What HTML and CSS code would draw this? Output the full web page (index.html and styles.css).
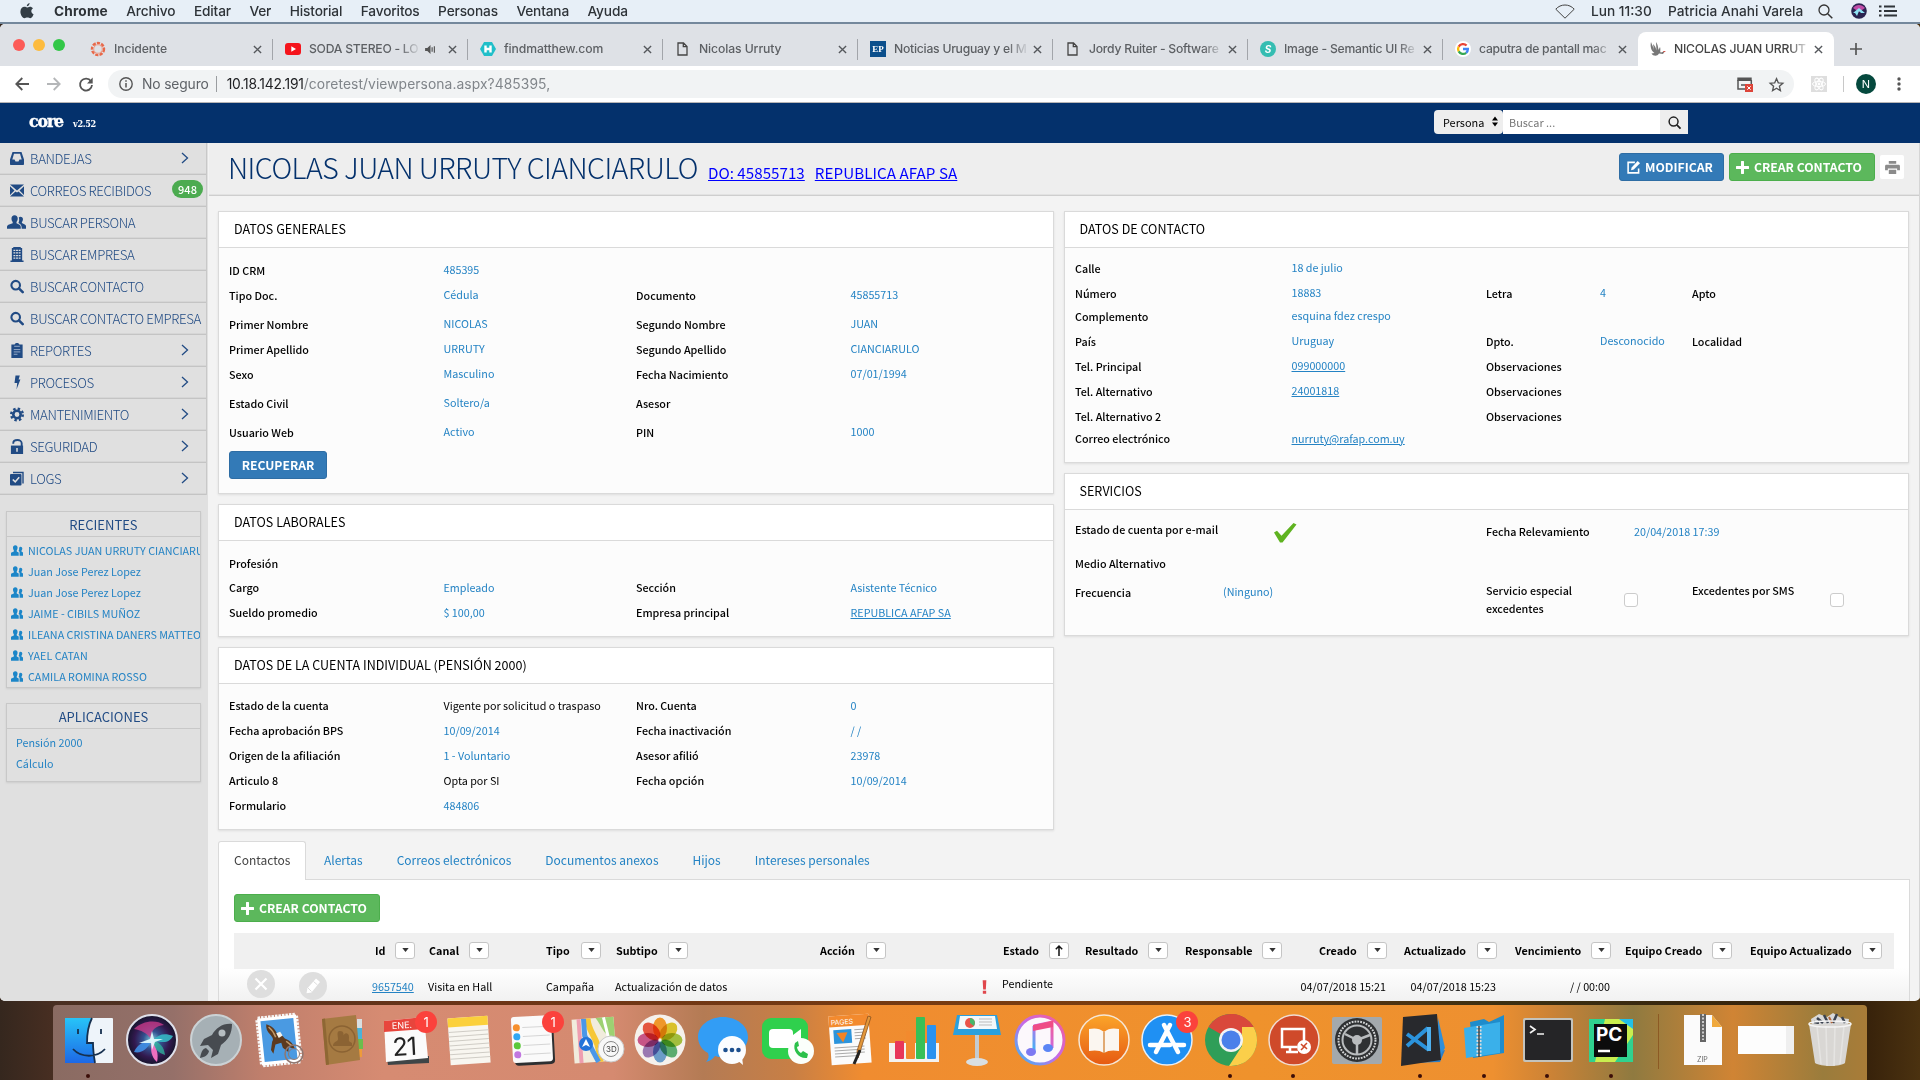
FILE: index.html
```html
<!DOCTYPE html>
<html lang="es">
<head>
<meta charset="utf-8">
<title>NICOLAS JUAN URRUTY CIANCIARULO</title>
<link rel="stylesheet" href="styles.css">
</head>
<body>
<svg class="defs" aria-hidden="true">
  <symbol id="users" viewBox="0 0 20 14"><path fill="currentColor" d="M8 0c2.200 0 3.300 1.500 3.300 3.400 0 1.500-.6 2.800-1.300 3.600v1.300l3.200 1.700c.9.500 1.300 1.400 1.300 2.500V14H0v-1.500C0 11.200.5 10.500 1.500 10L6 8.300V7C5.200 6.200 4.700 4.900 4.700 3.400 4.700 1.500 5.800 0 8 0zM12.400 2.300c.4-.5 1-.8 1.800-.8 1.700 0 2.600 1.200 2.600 2.700 0 1.100-.5 2.200-1.100 2.800v1l3 1.500c.9.500 1.300 1.100 1.300 2.100V14h-4.500c0-2.500-.6-4.200-1.800-4.900L12 8c.8-1.200 1.200-3.700.4-5.700z"/></symbol>
  <symbol id="users2" viewBox="0 0 14 12"><path fill="currentColor" d="M5 0c1.800 0 2.700 1.200 2.700 2.800 0 1.200-.4 2.300-1 3v1.400l2.300 1V12H0V8.700L3.300 7.200V5.800c-.6-.7-1-1.800-1-3C2.300 1.200 3.200 0 5 0zM11 1.500c1.500 0 2.200 1 2.200 2.200 0 1-.4 1.900-1 2.500v1.100l1.800.9V12h-4V7.500L8.800 6.700c.6-1 .9-2.300.7-3.700C9.700 2 10.200 1.500 11 1.500z"/></symbol>
  <symbol id="search" viewBox="0 0 16 16"><circle cx="6.500" cy="6.500" r="4.900" fill="none" stroke="currentColor" stroke-width="2.400"/><path d="M10.200 10.200l4.300 4.300" stroke="currentColor" stroke-width="2.900" stroke-linecap="round"/></symbol>
  <symbol id="chev" viewBox="0 0 8 12"><path d="M1 1l5.500 5L1 11" fill="none" stroke="currentColor" stroke-width="1.300"/></symbol>
  <symbol id="x" viewBox="0 0 10 10"><path d="M1 1l8 8M9 1L1 9" stroke="currentColor" stroke-width="1.500"/></symbol>
  <symbol id="page" viewBox="0 0 11 14"><path d="M1 1h5.500L10 4.500V13H1zM6.300 1v3.700H10" fill="none" stroke="currentColor" stroke-width="1.300"/></symbol>
  <symbol id="plus" viewBox="0 0 14 14"><path d="M7 1v12M1 7h12" stroke="currentColor" stroke-width="3.200" stroke-linecap="round"/></symbol>
  <symbol id="down" viewBox="0 0 8 5"><path fill="#333" d="M0 0h8L4 5z"/></symbol>
</svg>

<header class="menubar">
  <svg class="apple" viewBox="0 0 14 16"><path fill="#333d45" d="M9.600 0c.1 1.400-1.100 3.200-2.800 3.300C6.600 1.800 8 .2 9.600 0zM7 4.500c.7 0 1.700-.9 3.100-.8 1 0 2.200.6 2.900 1.600-2.500 1.500-2.100 4.900.6 5.900-.6 1.700-1.900 4-3.300 4-1 0-1.600-.6-2.900-.6s-2 .6-2.900.6C2.700 15.200.4 11.900.4 8.700c0-3 2-4.900 4.100-4.900 1.100 0 1.900.7 2.500.7z"/></svg>
  <nav class="menus"><b>Chrome</b><span>Archivo</span><span>Editar</span><span>Ver</span><span>Historial</span><span>Favoritos</span><span>Personas</span><span>Ventana</span><span>Ayuda</span></nav>
  <div class="status">
    <svg class="wifi" viewBox="0 0 20 15"><path d="M.8 5.200C5.500-.4 14.500-.4 19.200 5.200L10 14.200z" fill="none" stroke="#444" stroke-width="1"/></svg>
    <span class="clock">Lun 11:30</span><span class="who">Patricia Anahi Varela</span>
    <svg class="glass" viewBox="0 0 15 15"><circle cx="6" cy="6" r="5" fill="none" stroke="#333" stroke-width="1.300"/><path d="M9.700 9.700l4.600 4.600" stroke="#333" stroke-width="1.500"/></svg>
    <svg class="siri" viewBox="0 0 16 16"><circle cx="8" cy="8" r="7.800" fill="#2b2350"/><path d="M2 5c3-4 9-4 12 0L8 9z" fill="#c04ca8"/><path d="M2 10l6-5 6 5-4 0-2-2-2 5-2-3z" fill="#8fe3f4"/></svg>
    <svg class="list" viewBox="0 0 18 12"><path d="M5 1.500h11M5 6h13M5 10.500h13M0 1.500h2.500M0 6h2.500M0 10.500h2.500" stroke="#2f3439" stroke-width="1.900"/></svg>
  </div>
</header>

<div class="window">
  <div class="tabstrip">
    <div class="lights"><i class="red"></i><i class="yel"></i><i class="grn"></i></div>
    <div class="tab"><svg class="fav" viewBox="0 0 16 16"><circle cx="8" cy="8" r="6" fill="none" stroke="#e8694a" stroke-width="2.400" stroke-dasharray="3.200 1.200"/><circle cx="8" cy="8" r="4.300" fill="none" stroke="#ee9b86"/></svg><span class="tt">Incidente</span><svg class="close"><use href="#x"/></svg></div>
    <div class="tab"><svg class="fav" viewBox="0 0 16 16"><rect y="2" width="16" height="12" rx="3" fill="#f5141c"/><path d="M6.300 5.300v5.400L11 8z" fill="#fff"/></svg><span class="tt fade">SODA STEREO - LO</span><svg class="snd" viewBox="0 0 12 10"><path d="M0 3.300h2.500L6 0v10L2.500 6.700H0z" fill="#555"/><path d="M7.800 2.500v5M10.300 1.500v7" stroke="#555" stroke-width="1.300"/></svg><svg class="close"><use href="#x"/></svg></div>
    <div class="tab"><svg class="fav" viewBox="0 0 16 16"><path d="M4 1h8l4 7-4 7H4L0 8z" fill="#20bfc9"/><path d="M5.500 4.500v7M10.500 4.500v7M5.500 8h5" stroke="#fff" stroke-width="2.400"/></svg><span class="tt">findmatthew.com</span><svg class="close"><use href="#x"/></svg></div>
    <div class="tab"><svg class="fav pg"><use href="#page"/></svg><span class="tt">Nicolas Urruty</span><svg class="close"><use href="#x"/></svg></div>
    <div class="tab"><span class="fav ep">EP</span><span class="tt fade">Noticias Uruguay y el M</span><svg class="close"><use href="#x"/></svg></div>
    <div class="tab"><svg class="fav pg"><use href="#page"/></svg><span class="tt fade">Jordy Ruiter - Software</span><svg class="close"><use href="#x"/></svg></div>
    <div class="tab"><span class="fav sem">S</span><span class="tt fade">Image - Semantic UI Re</span><svg class="close"><use href="#x"/></svg></div>
    <div class="tab nosep"><svg class="fav" viewBox="0 0 16 16"><circle cx="8" cy="8" r="8" fill="#fff"/><g fill="none" stroke-width="2.300"><path d="M11.600 4.500A5 5 0 0 0 3.700 5.600" stroke="#e94335"/><path d="M3.700 5.600a5 5 0 0 0 0 4.800" stroke="#fbbc05"/><path d="M3.700 10.400a5 5 0 0 0 7.500 1.400" stroke="#34a853"/><path d="M11.200 11.800A5 5 0 0 0 12.900 8H8" stroke="#4285f4"/></g></svg><span class="tt fade">caputra de pantall mac</span><svg class="close"><use href="#x"/></svg></div>
    <div class="tab active"><svg class="fav" viewBox="0 0 16 16"><path d="M1 1c1 3 2 4 3 8L3 3c2 2 3 4 3.500 6.500L6 1c2 3 2 5 2.500 8L10 6c1 3-.5 5 1 5.500l4-1.500-2 3-4-.4C7 16 3 15 1.500 12.500l3-.5C1 10 0 5 1 1z" fill="#777"/><path d="M13 10.300l3-.2-2.300 1.500z" fill="#d63a2e"/></svg><span class="tt fade">NICOLAS JUAN URRUT</span><svg class="close"><use href="#x"/></svg></div>
    <svg class="newtab" viewBox="0 0 12 12"><path d="M6 0v12M0 6h12" stroke="#555" stroke-width="1.700"/></svg>
  </div>
  <div class="toolbar">
    <svg class="nav" viewBox="0 0 14 14"><path d="M14 7H1.500M7.300 1L1.300 7l6 6" fill="none" stroke="#555" stroke-width="1.800"/></svg>
    <svg class="nav" viewBox="0 0 14 14"><path d="M0 7h12.500M6.700 1l6 6-6 6" fill="none" stroke="#b4b6b8" stroke-width="1.800"/></svg>
    <svg class="nav" viewBox="0 0 14 14"><path d="M12 4.200A6 6 0 1 0 13 8" fill="none" stroke="#555" stroke-width="1.800"/><path d="M13.700.5v6H8z" fill="#555"/></svg>
    <div class="omni">
      <svg class="info" viewBox="0 0 14 14"><circle cx="7" cy="7" r="6.200" fill="none" stroke="#555" stroke-width="1.400"/><path d="M7 6v4.500M7 3.200v1.600" stroke="#555" stroke-width="1.500"/></svg>
      <span class="nos">No seguro</span><span class="url"><b>10.18.142.191</b>/coretest/viewpersona.aspx?485395,</span>
      <svg class="pop" viewBox="0 0 16 15"><path d="M1 3v9h7M14.300 3v4M4 8h5" fill="none" stroke="#555" stroke-width="1.500"/><path d="M.3.500h14.400v3.500H.3z" fill="#555"/><rect x="8" y="7" width="8" height="8" fill="#dd4439"/><path d="M10.300 9.300l3.400 3.400M13.700 9.300l-3.400 3.400" stroke="#fff"/></svg>
      <svg class="star" viewBox="0 0 16 15"><path d="M8 1.200l1.900 4.500 4.900.4-3.700 3.200 1.100 4.800L8 11.500l-4.200 2.600 1.100-4.800L1.200 6.100l4.900-.4z" fill="none" stroke="#555" stroke-width="1.400"/></svg>
    </div>
    <svg class="ext" viewBox="0 0 16 16"><rect width="16" height="16" fill="#dedede"/><g fill="none" stroke="#fff"><ellipse cx="8" cy="8" rx="6.500" ry="2.600"/><ellipse cx="8" cy="8" rx="6.500" ry="2.600" transform="rotate(60 8 8)"/><ellipse cx="8" cy="8" rx="6.500" ry="2.600" transform="rotate(120 8 8)"/></g><circle cx="8" cy="8" r="1.400" fill="#fff"/></svg>
    <i class="vsep"></i><span class="avatar">N</span>
    <svg class="dots" viewBox="0 0 4 14"><g fill="#555"><circle cx="2" cy="2" r="1.700"/><circle cx="2" cy="7" r="1.700"/><circle cx="2" cy="12" r="1.700"/></g></svg>
  </div>

  <div class="apphead">
    <span class="logo">core</span><span class="ver">v2.52</span>
    <div class="find"><span class="sel">Persona<svg viewBox="0 0 6 10"><path d="M3 0l3 4H0zM3 10L0 6h6z"/></svg></span><span class="inp">Buscar ...</span><span class="go"><svg viewBox="0 0 14 14"><circle cx="6" cy="6" r="4.800" fill="none" stroke="#222" stroke-width="1.600"/><path d="M9.500 9.500l4 4" stroke="#222" stroke-width="1.900"/></svg></span></div>
  </div>

  <div class="body">
    <aside class="side">
      <ul class="menu">
        <li><svg class="ic" viewBox="0 0 14 14"><path fill="currentColor" fill-rule="evenodd" d="M2.500.5h9L14 8v4.500c0 .8-.4 1-1 1H1c-.6 0-1-.3-1-1V8zM4 2.300L2.300 8H4.500l1 2h3l1-2h2.200L10 2.300z"/></svg>BANDEJAS<svg class="ch"><use href="#chev"/></svg></li>
        <li><svg class="ic" viewBox="0 0 14 12"><path fill="currentColor" d="M0 0h14L7 6zM0 1.800L4.500 6 0 10.400zM14 1.800L9.500 6l4.500 4.400zM5.500 6.900L7 8l1.500-1.100L14 12H0z"/></svg>CORREOS RECIBIDOS<em>948</em></li>
        <li><svg class="ic wide"><use href="#users"/></svg>BUSCAR PERSONA</li>
        <li><svg class="ic" viewBox="0 0 14 16"><path fill="currentColor" d="M3 0h8v1h1.500v13.500H14V16H0v-1.500h1.500V1H3z"/><path d="M3.200 3.500h7.600M3.200 6.300h7.600M3.200 9.100h7.600M3.200 11.900h7.600" stroke="#e0e0e0" stroke-width="1.400" stroke-dasharray="2 .8"/></svg>BUSCAR EMPRESA</li>
        <li><svg class="ic"><use href="#search"/></svg>BUSCAR CONTACTO</li>
        <li><svg class="ic"><use href="#search"/></svg>BUSCAR CONTACTO EMPRESA</li>
        <li><svg class="ic" viewBox="0 0 14 16"><path fill="currentColor" d="M1 1.500h3.500C5 .5 6 0 7 0s2 .5 2.500 1.500H13V16H1z"/><path d="M4 3.500h6M3.500 7h7M3.500 9.500h7M3.500 12h4" stroke="#9db0cb" stroke-width="1"/></svg>REPORTES<svg class="ch"><use href="#chev"/></svg></li>
        <li><svg class="ic" viewBox="0 0 14 14"><path fill="currentColor" d="M5.500 0h4.300L8.600 4h1.800L6.500 14l.7-6.500H4.500z"/></svg>PROCESOS<svg class="ch"><use href="#chev"/></svg></li>
        <li><svg class="ic" viewBox="0 0 14 14"><circle cx="7" cy="7" r="5.800" fill="none" stroke="currentColor" stroke-width="2.400" stroke-dasharray="2.400 2.155"/><circle cx="7" cy="7" r="3.700" fill="none" stroke="currentColor" stroke-width="2.600"/></svg>MANTENIMIENTO<svg class="ch"><use href="#chev"/></svg></li>
        <li><svg class="ic" viewBox="0 0 14 16"><path d="M3 5V4.500C3 2 5 1 7.500 1S12 2.500 12 4.500V8" fill="none" stroke="currentColor" stroke-width="2"/><path fill="currentColor" d="M.5 7h13v9H.5z"/><path d="M7 9.500v4" stroke="#e0e0e0" stroke-width="1.600"/></svg>SEGURIDAD<svg class="ch"><use href="#chev"/></svg></li>
        <li><svg class="ic" viewBox="0 0 14 14"><path d="M3 1h10v11" fill="none" stroke="currentColor" stroke-width="1.400"/><rect y="2.500" width="11.500" height="11.500" rx="1" fill="currentColor"/><path d="M2.800 8l2.400 2.400 4-4.600" fill="none" stroke="#e0e0e0" stroke-width="1.600"/></svg>LOGS<svg class="ch"><use href="#chev"/></svg></li>
      </ul>
      <section class="box rec"><h3>RECIENTES</h3>
        <a><svg><use href="#users2"/></svg>NICOLAS JUAN URRUTY CIANCIARULO</a>
        <a><svg><use href="#users2"/></svg>Juan Jose Perez Lopez</a>
        <a><svg><use href="#users2"/></svg>Juan Jose Perez Lopez</a>
        <a><svg><use href="#users2"/></svg>JAIME - CIBILS MUÑOZ</a>
        <a><svg><use href="#users2"/></svg>ILEANA CRISTINA DANERS MATTEO</a>
        <a><svg><use href="#users2"/></svg>YAEL CATAN</a>
        <a><svg><use href="#users2"/></svg>CAMILA ROMINA ROSSO</a>
      </section>
      <section class="box apps"><h3>APLICACIONES</h3><a>Pensión 2000</a><a>Cálculo</a></section>
    </aside>

    <main class="main">
      <div class="titlebar">
        <h1>NICOLAS JUAN URRUTY CIANCIARULO</h1><a class="doc">DO: 45855713</a><a class="org">REPUBLICA AFAP SA</a>
        <div class="acts">
          <button class="btn blue mod"><svg viewBox="0 0 14 14"><path d="M8.500 1.500H1.200v11.300h11.300V8" fill="none" stroke="#fff" stroke-width="1.700"/><path d="M11.500 0L14 2.400 7.300 9.200l-3 .7.700-3z" fill="#fff"/></svg>MODIFICAR</button>
          <button class="btn green crear"><svg><use href="#plus"/></svg>CREAR CONTACTO</button>
          <span class="print"><svg viewBox="0 0 16 14"><path fill="#8b8b8b" d="M4 0h8v3H4zM1.500 4h13c1 0 1.500.6 1.500 1.500V10h-3V8H3v2H0V5.500C0 4.600.5 4 1.500 4zM4 9.500h8V14H4z"/></svg></span>
        </div>
      </div>

      <div class="cols">
        <div class="left">
          <section class="card gen"><h2>DATOS GENERALES</h2><div class="cb">
            <div class="row"><b>ID CRM</b><span>485395</span></div>
            <div class="row t"><b>Tipo Doc.</b><span>Cédula</span><b>Documento</b><span>45855713</span></div>
            <div class="row"><b>Primer Nombre</b><span>NICOLAS</span><b>Segundo Nombre</b><span>JUAN</span></div>
            <div class="row"><b>Primer Apellido</b><span>URRUTY</span><b>Segundo Apellido</b><span>CIANCIARULO</span></div>
            <div class="row t"><b>Sexo</b><span>Masculino</span><b>Fecha Nacimiento</b><span>07/01/1994</span></div>
            <div class="row t"><b>Estado Civil</b><span>Soltero/a</span><b>Asesor</b><span></span></div>
            <div class="row l"><b>Usuario Web</b><span>Activo</span><b>PIN</b><span>1000</span></div>
            <button class="btn blue recu">RECUPERAR</button>
          </div></section>
          <section class="card lab"><h2>DATOS LABORALES</h2><div class="cb">
            <div class="row s"><b>Profesión</b></div>
            <div class="row"><b>Cargo</b><span>Empleado</span><b>Sección</b><span>Asistente Técnico</span></div>
            <div class="row"><b>Sueldo promedio</b><span>$ 100,00</span><b>Empresa principal</b><span><u>REPUBLICA AFAP SA</u></span></div>
          </div></section>
          <section class="card cta"><h2>DATOS DE LA CUENTA INDIVIDUAL (PENSIÓN 2000)</h2><div class="cb">
            <div class="row"><b>Estado de la cuenta</b><span class="k">Vigente por solicitud o traspaso</span><b>Nro. Cuenta</b><span>0</span></div>
            <div class="row"><b>Fecha aprobación BPS</b><span>10/09/2014</span><b>Fecha inactivación</b><span>/ /</span></div>
            <div class="row"><b>Origen de la afiliación</b><span>1 - Voluntario</span><b>Asesor afilió</b><span>23978</span></div>
            <div class="row"><b>Articulo 8</b><span class="k">Opta por SI</span><b>Fecha opción</b><span>10/09/2014</span></div>
            <div class="row"><b>Formulario</b><span>484806</span></div>
          </div></section>
        </div>
        <div class="right">
          <section class="card con"><h2>DATOS DE CONTACTO</h2><div class="cb">
            <div class="row"><b>Calle</b><span>18 de julio</span></div>
            <div class="row s"><b>Número</b><span>18883</span><b>Letra</b><span>4</span><b>Apto</b></div>
            <div class="row"><b>Complemento</b><span>esquina fdez crespo</span></div>
            <div class="row"><b>País</b><span>Uruguay</span><b>Dpto.</b><span>Desconocido</span><b>Localidad</b></div>
            <div class="row"><b>Tel. Principal</b><span><u>099000000</u></span><b>Observaciones</b></div>
            <div class="row"><b>Tel. Alternativo</b><span><u>24001818</u></span><b>Observaciones</b></div>
            <div class="row xs"><b>Tel. Alternativo 2</b><span></span><b>Observaciones</b></div>
            <div class="row lastrow"><b>Correo electrónico</b><span><u>nurruty@rafap.com.uy</u></span></div>
          </div></section>
          <section class="card ser"><h2>SERVICIOS</h2><div class="cb">
            <div class="srow r1"><b>Estado de cuenta por e-mail</b><svg class="ok" viewBox="0 0 24 20"><path d="M1 9.500l3-1.700 4.500 5L20.500 0 23.500 1.500 9.500 19.500H7z" fill="#5fb320"/></svg><b class="lower">Fecha Relevamiento</b><span class="lower">20/04/2018 17:39</span></div>
            <div class="srow r2"><b>Medio Alternativo</b></div>
            <div class="srow r3"><b class="lower">Frecuencia</b><span>(Ninguno)</span><b class="two">Servicio especial excedentes</b><i class="chk"></i><b class="sms">Excedentes por SMS</b><i class="chk"></i></div>
          </div></section>
        </div>
      </div>

      <nav class="tabs"><span class="on">Contactos</span><span>Alertas</span><span>Correos electrónicos</span><span>Documentos anexos</span><span>Hijos</span><span>Intereses personales</span></nav>
      <div class="pane">
        <button class="btn green crear"><svg><use href="#plus"/></svg>CREAR CONTACTO</button>
        <div class="thead">
          <div class="h1c">Id<i><svg><use href="#down"/></svg></i></div>
          <div class="h2c">Canal<i><svg><use href="#down"/></svg></i></div>
          <div class="h3c">Tipo<i><svg><use href="#down"/></svg></i></div>
          <div class="h4c">Subtipo<i><svg><use href="#down"/></svg></i></div>
          <div class="h5c">Acción<i><svg><use href="#down"/></svg></i></div>
          <div class="h6c">Estado<i><svg class="up" viewBox="0 0 8 11"><path d="M4 11V1M.8 4.200L4 1l3.200 3.200" fill="none" stroke="#111" stroke-width="1.500"/></svg></i></div>
          <div class="h7c">Resultado<i><svg><use href="#down"/></svg></i></div>
          <div class="h8c">Responsable<i><svg><use href="#down"/></svg></i></div>
          <div class="h9c">Creado<i><svg><use href="#down"/></svg></i></div>
          <div class="h10c">Actualizado<i><svg><use href="#down"/></svg></i></div>
          <div class="h11c">Vencimiento<i><svg><use href="#down"/></svg></i></div>
          <div class="h12c">Equipo Creado<i><svg><use href="#down"/></svg></i></div>
          <div class="h13c">Equipo Actualizado<i><svg><use href="#down"/></svg></i></div>
        </div>
        <div class="trow">
          <svg class="circ" viewBox="0 0 28 28"><circle cx="14" cy="14" r="14" fill="#dedede"/><path d="M8.500 8.500l11 11M19.500 8.500l-11 11" stroke="#fff" stroke-width="2.200"/></svg>
          <svg class="circ low" viewBox="0 0 28 28"><circle cx="14" cy="14" r="14" fill="#dedede"/><path d="M17 6.500l4 3.500-8.500 10.500-5 .8 1-5z" fill="#fff"/><path d="M14.500 9.500l4 3.500M9 16l3.500 3.500" stroke="#dedede" stroke-width="1"/></svg>
          <u class="id">9657540</u><span>Visita en Hall</span><span>Campaña</span><span>Actualización de datos</span>
          <svg class="bang" viewBox="0 0 6 16"><path d="M.8 0h4.400l-.6 11H1.400zM1 12.500h4V16H1z" fill="#e0474c"/></svg>
          <span class="pend">Pendiente</span><span class="d">04/07/2018 15:21</span><span class="d">04/07/2018 15:23</span><span class="d">/ / 00:00</span>
        </div>
      </div>
    </main>
  </div>
</div>

<footer class="dock">
  <div class="app run"><svg viewBox="0 0 52 52"><defs><linearGradient id="fi" x2="0" y2="1"><stop stop-color="#27c4f8"/><stop offset="1" stop-color="#1d68e6"/></linearGradient></defs><rect x="2" y="4" width="48" height="45" rx="1" fill="#eef4fa"/><path d="M2 4h27c-4 8-5 16-5 25h6c0 8 1 14 2 20H2z" fill="url(#fi)"/><path d="M29 4c-4 8-5 16-5 25h6c0 8 1 14 2 20M15 15v5M38 15v5M10 35c8 9 24 9 32 0" fill="none" stroke="#16304f" stroke-width="1.800"/></svg></div>
  <div class="app"><svg viewBox="0 0 52 52"><defs><radialGradient id="si"><stop stop-color="#7fd0e0"/><stop offset=".35" stop-color="#33518f"/><stop offset=".7" stop-color="#32194f"/><stop offset="1" stop-color="#14142a"/></radialGradient></defs><circle cx="26" cy="26" r="25" fill="url(#si)" stroke="#dfe0ea" stroke-width="2"/><path d="M8 15c8-8 22-10 30-4-8 1-14 5-13 14-4-6-10-9-17-10z" fill="#d13c8c" opacity=".75"/><path d="M27 26c6-6 12-7 20-4-3 6-9 8-20 4z" fill="#35b8c4" opacity=".9"/><path d="M25 27c-6 0-14 3-17 11 7 2 14-3 17-11z" fill="#3f8fe6" opacity=".9"/><path d="M26 27c4 5 7 13 5 21-6-5-7-13-5-21z" fill="#ef6fc0"/><path d="M27 27c7 1 11 6 12 14-7-2-11-7-12-14z" fill="#2fb8a0" opacity=".75"/><path d="M26 17l2 8 9 0-8 3-3 8-1-7-12 0 11-4z" fill="#e4fdff" opacity=".9"/></svg></div>
  <div class="app"><svg viewBox="0 0 52 52"><circle cx="26" cy="26" r="25" fill="#a6b0b5" stroke="#cbd2d5" stroke-width="2"/><path d="M42 10c-9-1-16 4-20 11l-8 4-4 7 8-1 5 5-2 8 7-4 3-9c7-5 11-11 11-21z" fill="#474b50"/><circle cx="32" cy="19" r="3.500" fill="#b5bdc1"/><path d="M16 34c-4 1-5 5-6 10 5-1 8-3 9-7z" fill="#474b50"/></svg></div>
  <div class="app"><svg viewBox="0 0 52 52"><g transform="rotate(-6 26 26)"><rect x="7" y="3" width="38" height="46" fill="none" stroke="#f6f6f6" stroke-width="5" stroke-dasharray="2.500 1"/><rect x="8" y="4" width="36" height="44" fill="#4a9ae2" stroke="#fff" stroke-width="3"/><path d="M15 9c5 2 9 6 10 12l4 0 3 4c6 3 8 7 9 12l-6-3-1 5-5-5-1-5-6 1-3 9-2-4 2-8c2-2 1-4-1-7-3-4-4-7-3-11z" fill="#5c3a1f"/><path d="M17 12c3 3 5 7 6 11M33 28l5 5" stroke="#c39a68" stroke-width="1.500" fill="none"/><path d="M24 19l4-1 2 4-4 2z" fill="#f4f1e9"/></g><circle cx="41" cy="40" r="9" fill="none" stroke="#8f7770" stroke-width="1.500"/><circle cx="41" cy="40" r="5.500" fill="none" stroke="#8f7770"/></svg></div>
  <div class="app"><svg viewBox="0 0 52 52"><path d="M41 5h5v12h-5z" fill="#d9dfe0"/><path d="M41 14h5v12h-5z" fill="#4ab3d9"/><path d="M41 25h6v10h-6z" fill="#6bbd4d"/><path d="M41 35h5v8h-5z" fill="#ee9b3a"/><path d="M6 5l34-4 4 45-34 5z" fill="#a57a42"/><path d="M6 5l3-.4 4 46-3 .4z" fill="#8e6734"/><circle cx="26" cy="25" r="13" fill="none" stroke="#8b6333" stroke-width="1.500"/><path d="M17 32c0-5 5-4 5-7s-2-8 2-8 4 3 3 7c0-6 6-6 6-1 0 4-1 4 3 6v3z" fill="#8b6333"/></svg></div>
  <div class="app"><svg viewBox="0 0 52 52"><path d="M7 45l42-3v7L8 51z" fill="#3f4547"/><path d="M4 7l40-4 4 41-42 4z" fill="#fbfbfb"/><path d="M4 7l40-4 1 12L4 18z" fill="#e8453c"/><text x="12" y="15" class="t9" transform="rotate(-3 12 15)">ENE.</text><text x="13" y="42" class="t22" transform="rotate(-3 13 42)">21</text></svg><span class="badge">1</span></div>
  <div class="app"><svg viewBox="0 0 52 52"><g transform="rotate(-4 26 26)"><path d="M6 3h40v47H6z" fill="#f8f6f0"/><path d="M6 3h40v9H6z" fill="#fbd03b"/><path d="M6 17h40M6 21.500h40M6 26h40M6 30.500h40M6 35h40M6 39.500h40M6 44h40" stroke="#cfccc5"/></g></svg></div>
  <div class="app"><svg viewBox="0 0 52 52"><g transform="rotate(-3 26 26)"><rect x="7" y="4" width="40" height="47" rx="4" fill="#2d2f31"/><rect x="5" y="2" width="40" height="46" rx="3" fill="#fafafa"/><path d="M16 13h27M16 22h27M16 31h27M16 40h27" stroke="#d5d5d5"/><circle cx="10" cy="13" r="3.500" fill="#f78f2d"/><circle cx="10" cy="22" r="3.500" fill="#2fa7f3"/><circle cx="10" cy="31" r="3.500" fill="#5cc83b"/><circle cx="10" cy="40" r="3.500" fill="#c177e0"/></g></svg><span class="badge">1</span></div>
  <div class="app"><svg viewBox="0 0 52 52"><g transform="rotate(-4 26 26)"><rect x="3" y="4" width="42" height="44" fill="#f1ecdd"/><path d="M10 4v44" stroke="#ee9eb0" stroke-width="4"/><path d="M19 4c0 16 10 18 10 44" fill="none" stroke="#f6c736" stroke-width="6"/><path d="M15 4v17l12 27" fill="none" stroke="#4b97e8" stroke-width="5"/><path d="M27 4h18v22c-12-4-12-14-18-22z" fill="#9dd172"/><path d="M35 4l4 23" stroke="#fff" stroke-width="3"/></g><circle cx="16" cy="30" r="7" fill="#2474d9"/><path d="M16 25l4 8-4-2-4 2z" fill="#fff"/><circle cx="41" cy="35" r="13" fill="#f8f8f8" stroke="#c8c8c8"/><circle cx="41" cy="35" r="7.500" fill="none" stroke="#888"/><text x="36" y="38" class="t8">3D</text></svg></div>
  <div class="app"><svg viewBox="0 0 52 52"><circle cx="26" cy="26" r="25.500" fill="#f5f1ec"/><g class="petals"><ellipse cx="26" cy="14" rx="7" ry="10.500" fill="#f9a02d"/><ellipse cx="26" cy="14" rx="7" ry="10.500" fill="#e2cc2f" transform="rotate(45 26 26)"/><ellipse cx="26" cy="14" rx="7" ry="10.500" fill="#a9c942" transform="rotate(90 26 26)"/><ellipse cx="26" cy="14" rx="7" ry="10.500" fill="#5fb679" transform="rotate(135 26 26)"/><ellipse cx="26" cy="14" rx="7" ry="10.500" fill="#6fa5d8" transform="rotate(180 26 26)"/><ellipse cx="26" cy="14" rx="7" ry="10.500" fill="#9f7fc0" transform="rotate(225 26 26)"/><ellipse cx="26" cy="14" rx="7" ry="10.500" fill="#cf5a91" transform="rotate(270 26 26)"/><ellipse cx="26" cy="14" rx="7" ry="10.500" fill="#ee5a44" transform="rotate(315 26 26)"/></g></svg></div>
  <div class="app"><svg viewBox="0 0 52 52"><path d="M26 3c14 0 25 9 25 20S40 43 26 43c-3 0-6 0-8-1-2 3-5 5-9 6 3-3 3-6 2-9C5 36 1 30 1 23 1 12 12 3 26 3z" fill="#329df5"/><circle cx="35" cy="36" r="14" fill="#fbfdff"/><path d="M40 46l6 5-1-8z" fill="#fbfdff"/><g fill="#1c508f"><circle cx="28.500" cy="36" r="2.300"/><circle cx="35" cy="36" r="2.300"/><circle cx="41.500" cy="36" r="2.300"/></g></svg></div>
  <div class="app"><svg viewBox="0 0 52 52"><rect x="1" y="4" width="46" height="41" rx="9" fill="#2fd04d"/><rect x="8" y="15" width="24" height="19" rx="4" fill="#fff"/><path d="M32 21l8-6v18l-8-5z" fill="#fff"/><circle cx="40" cy="37" r="13" fill="#fbfffb"/><path d="M34 29c-3 8 4 16 12 15l1-4-5-3-2 2c-2-1-4-4-4-6l2-1-1-5z" fill="#2bc14a"/></svg></div>
  <div class="app"><svg viewBox="0 0 52 52"><g transform="rotate(-4 26 26)"><rect x="6" y="1" width="40" height="49" fill="#fbfbfb"/><path d="M6 1h40v11H6z" fill="#f38a2e"/><text x="8" y="10" class="t7">PAGES</text><rect x="10" y="15" width="18" height="14" fill="#2c94dc"/><path d="M13 18l11 0-5 10z" fill="#f38325"/><path d="M31 16h11M31 19h11M31 22h11M31 25h11M10 33h30M10 36h30M10 39h30M10 42h24" stroke="#aaa"/></g><path d="M44 2l3 1-11 35-2 6-1-7z" fill="#e3973a" stroke="#8a5220" stroke-width=".8"/><path d="M36 36l-6 14" stroke="#222" stroke-width="3"/></svg></div>
  <div class="app"><svg viewBox="0 0 52 52"><path d="M2 29h50v19H2z" fill="#f4f2ef"/><rect x="8" y="27" width="9" height="18" rx="1" fill="#e8365a"/><rect x="19" y="17" width="9" height="28" rx="1" fill="#f28a2e"/><rect x="29" y="3" width="9" height="42" rx="1" fill="#37c057"/><rect x="40" y="11" width="9" height="34" rx="1" fill="#2a92ef"/></svg></div>
  <div class="app"><svg viewBox="0 0 52 52"><path d="M24 20h4v28h-4z" fill="#c4cbd0"/><ellipse cx="26" cy="48" rx="11" ry="4" fill="#d9dfe3"/><path d="M6 1h40l4 20H2z" fill="#2ba0dd"/><path d="M9 2h35l2 13H7z" fill="#f4f8fa"/><circle cx="19" cy="9" r="5" fill="#e9544a"/><path d="M19 9V4a5 5 0 0 1 4 8z" fill="#48b76b"/><path d="M28 5h13M28 8h13M28 11h13" stroke="#bbb"/></svg></div>
  <div class="app"><svg viewBox="0 0 52 52"><defs><linearGradient id="it" x1="1" y1="0" x2="0" y2="1"><stop stop-color="#f75b92"/><stop offset=".5" stop-color="#c56be8"/><stop offset="1" stop-color="#38b8f5"/></linearGradient></defs><circle cx="26" cy="26" r="24" fill="#fcf8fc" stroke="url(#it)" stroke-width="3"/><path d="M20 12l18-4v26M20 12v26" fill="none" stroke="url(#it)" stroke-width="3"/><path d="M19 11l20-4v6l-20 4z" fill="#ef4d86"/><ellipse cx="17" cy="38" rx="5" ry="4" fill="#7d79f2"/><ellipse cx="34" cy="34" rx="5" ry="4" fill="#5b85f5"/></svg></div>
  <div class="app"><svg viewBox="0 0 52 52"><defs><linearGradient id="bk" x2="0" y2="1"><stop stop-color="#fba52a"/><stop offset="1" stop-color="#e65a12"/></linearGradient></defs><circle cx="26" cy="26" r="25" fill="url(#bk)" stroke="#f5e6d6" stroke-width="1.500"/><path d="M26 18c-4-4-10-4-15-3v22c5-1 11-1 15 2 4-3 10-3 15-2V15c-5-1-11-1-15 3z" fill="#fbf6f0"/><path d="M26 18v21" stroke="#d9914a" stroke-width="1.500"/></svg></div>
  <div class="app"><svg viewBox="0 0 52 52"><circle cx="26" cy="26" r="25" fill="#1f90f3" stroke="#e6eff8" stroke-width="1.500"/><path d="M29 11L15 38M23 11l14 27M9 31h20M35 31h8" stroke="#fff" stroke-width="4.500" stroke-linecap="round"/></svg><span class="badge">3</span></div>
  <div class="app run"><svg viewBox="0 0 52 52"><circle cx="26" cy="26" r="26" fill="#2f9e58"/><path d="M26 26L3.500 13A26 26 0 0 1 48.500 13z" fill="#d9483b"/><path d="M26 0a26 26 0 0 1 22.500 13H26z" fill="#d9483b"/><path d="M48.500 13A26 26 0 0 1 24 52l13-20 0-19z" fill="#fbcf4a"/><circle cx="26" cy="26" r="12" fill="#f4f4f4"/><circle cx="26" cy="26" r="9.500" fill="#4a80ea"/></svg></div>
  <div class="app run"><svg viewBox="0 0 52 52"><circle cx="26" cy="26" r="25" fill="#cf4a2a" stroke="#f0dcd2" stroke-width="1.500"/><path d="M36 27V15H14v18h15M18 38h12M22 33v5" fill="none" stroke="#fff" stroke-width="2.500"/><circle cx="36" cy="33" r="7" fill="#fff"/><path d="M33 30l3 3-3 3M39 29l-3 3 3 3" fill="none" stroke="#cf4a2a" stroke-width="1.500"/></svg></div>
  <div class="app"><svg viewBox="0 0 52 52"><rect x="1" y="3" width="50" height="47" rx="2" fill="#a3a9ad"/><circle cx="26" cy="26" r="22" fill="#2f3133"/><circle cx="26" cy="26" r="18.500" fill="none" stroke="#d2d4d5" stroke-width="2" stroke-dasharray="1.800 1.100"/><circle cx="26" cy="26" r="14.500" fill="none" stroke="#b9bcbe" stroke-width="2"/><path d="M26 26L14 20M26 26l13-5M26 26l0 15" stroke="#b9bcbe" stroke-width="2.500"/><circle cx="26" cy="26" r="5" fill="#b9bcbe"/></svg></div>
  <div class="app run"><svg viewBox="0 0 52 52"><path d="M12 44l38-8-5 12-30 1z" fill="#2b7fc7"/><path d="M43 4l7 30-8 12z" fill="#2f8fdb"/><path d="M8 3L42 0 46 46 6 52z" fill="#28292d"/><path d="M12 20l22 16M12 32l21-18" stroke="#2b93dc" stroke-width="4"/><path d="M34 13v24" stroke="#4fb0ee" stroke-width="4"/></svg></div>
  <div class="app run"><svg viewBox="0 0 52 52"><path d="M12 8l14-3 5 3 15-7v38l-31 5z" fill="#1f8ccb"/><path d="M6 14l36-6v31L8 44z" fill="#3ab0ea"/><path d="M21 12v31" stroke="#ddd" stroke-width="5" stroke-dasharray="2 1.500"/><path d="M21 12v31" stroke="#444" stroke-width="1.500"/></svg></div>
  <div class="app run"><svg viewBox="0 0 52 52"><rect x="1" y="4" width="50" height="44" rx="2" fill="#c3c3bd"/><rect x="3" y="6" width="46" height="40" rx="1" fill="#252527"/><path d="M8 12l5 3.500-5 3.500M15 20h7" fill="none" stroke="#f2f2f2" stroke-width="1.700"/></svg></div>
  <div class="app run"><svg viewBox="0 0 52 52"><rect x="4" y="5" width="44" height="43" fill="#2fd28f"/><path d="M20 5h28v16L30 48H10z" fill="#c9ee4f"/><path d="M34 5h14v10z" fill="#22c0e8"/><rect x="9" y="10" width="33" height="33" fill="#0c0c0c"/><text x="11" y="27" class="t18">PC</text><path d="M13 37h12" stroke="#fff" stroke-width="2.500"/></svg></div>
  <i class="dsep"></i>
  <div class="app zip"><svg viewBox="0 0 52 52"><path d="M7 1h28l10 12v38H7z" fill="#fbfbfb"/><path d="M35 1l10 12H35z" fill="#f0a93d"/><path d="M26 0v28" stroke="#666" stroke-width="6"/><path d="M26 0v26" stroke="#ccc" stroke-width="2" stroke-dasharray="2 1.500"/><text x="20" y="48" class="tz">ZIP</text></svg></div>
  <div class="app win"><svg viewBox="0 0 56 52"><path d="M0 12h56v28H0z" fill="#fdfdfd"/><path d="M48 12h8v28h-8z" fill="#efefef"/></svg></div>
  <div class="app bin"><svg viewBox="0 0 52 52"><path d="M7 5l8-5 8 3 6-4 8 5 8 1-1 7H8z" fill="#d8d8d8"/><path d="M13 4l6 5M20 1l4 8M33 0l-4 9M38 3l3 6M10 8l5 1" stroke="#3b4350" stroke-width="2.500"/><path d="M25 3l3 6" stroke="#b5673a" stroke-width="2"/><path d="M5 10h42l-6 39c-5 4-24 4-30 0z" fill="#d9d7d4"/><path d="M13 12l4 38M22 12l1 40M31 12l-1 40M40 12l-4 38" stroke="#e9e8e6" stroke-width="1.500" opacity=".8"/><ellipse cx="26" cy="10" rx="21" ry="3" fill="none" stroke="#f5f5f5" stroke-width="1.500"/></svg></div>
</footer>
</body>
</html>
```
FILE: styles.css
```css
* { box-sizing: border-box; }
html, body { margin: 0; height: 1080px; overflow: hidden; }
body {
  width: 1920px;
  position: relative;
  background: linear-gradient(90deg, #35271e 0, #4a2f22 60px, #6d3517 500px, #7a3d10 1100px, #3c3013 1500px, #35200a 1860px, #4b3210 1920px);
  font-family: "Noto Sans CJK SC", "Open Sans", sans-serif;
  font-size: 10.75px;
  color: #000;
}
.defs { display: none; }
svg { display: block; flex: none; overflow: visible; }
h1, h2, h3, ul { margin: 0; padding: 0; font-weight: 400; }
i, em { font-style: normal; }

/* system menu bar */
.menubar {
  display: flex; align-items: center; height: 24px; padding: 0 23px 0 20px;
  background: #e7eff7; border-bottom: 2px solid #74889c;
  font: 500 13.700px/22px Inter, sans-serif; color: #2e3338;
}
.apple { width: 14px; height: 16px; }
.menus { display: flex; gap: 18.500px; margin-left: 20px; letter-spacing: -.16px; }
.menus b { font-weight: 700; letter-spacing: .15px; }
.status { display: flex; align-items: center; margin-left: auto; white-space: nowrap; }
.wifi { width: 20px; height: 15px; margin-right: 16px; }
.clock { width: 77px; letter-spacing: 0; }
.who { width: 150px; letter-spacing: .02px; }
.glass { width: 15px; height: 15px; }
.siri { width: 16px; height: 16px; margin: 0 12px 0 18px; }
.list { width: 18px; height: 12px; }

/* browser window */
.window { height: 977px; overflow: hidden; border-radius: 5px; background: #f3f3f3; }
.tabstrip { display: flex; height: 42px; background: #dee1e6; font: 500 12.200px/16px Inter, sans-serif; color: #5d6064; }
.lights { display: flex; gap: 8px; width: 78px; padding: 15px 0 0 13px; }
.lights i { width: 12px; height: 12px; border-radius: 50%; }
.red { background: #fc5b57; } .yel { background: #fdbb3e; } .grn { background: #33c748; }
.tab { display: flex; align-items: center; width: 195px; height: 34px; margin-top: 8px; padding: 0 10px 0 12px; position: relative; }
.tab:not(.nosep):not(.active)::after { content: ""; position: absolute; right: 0; top: 7px; width: 1px; height: 21px; background: #a2a5aa; }
.fav { width: 16px; height: 16px; margin-right: 8px; flex: none; }
.pg { width: 11px; height: 14px; margin: 0 11px 0 2px; color: #444; }
.ep { background: #0b4f8c; color: #fff; font: 700 9px/16px "Liberation Serif", serif; text-align: center; }
.sem { border-radius: 50%; background: #35bdb2; color: #fff; font: italic 700 10px/16px Inter, sans-serif; text-align: center; }
.tt { flex: 1; overflow: hidden; white-space: nowrap; letter-spacing: -.1px; }
.fade { letter-spacing: -.25px; -webkit-mask-image: linear-gradient(90deg, #000 calc(100% - 18px), rgba(0,0,0,.15)); mask-image: linear-gradient(90deg, #000 calc(100% - 18px), rgba(0,0,0,.15)); }
.close { width: 9px; height: 9px; margin: 0 1px 0 7px; color: #55585c; }
.snd { width: 11px; height: 9px; margin: 0 5px 0 7px; }
.tab.active { width: 196px; background: #fff; border-radius: 8px 8px 0 0; color: #444; }
.newtab { width: 12px; height: 12px; margin: 19px 0 0 16px; }

.toolbar { display: flex; align-items: center; height: 37px; padding: 0 19px 0 15px; background: #fff; border-bottom: 1px solid #b7b5b5; }
.nav { width: 14px; height: 14px; margin-right: 18px; }
.omni { display: flex; align-items: center; width: 1686px; height: 28px; margin-left: -3px; padding: 0 10px 0 11px; border-radius: 14px; background: #f1f3f4; font: 400 13.850px/28px Inter, sans-serif; color: #80858a; }
.info { width: 14px; height: 14px; }
.nos { margin-left: 9px; padding-right: 7px; border-right: 1px solid #9a9da0; line-height: 16px; color: #5f6368; letter-spacing: -.15px; }
.url { margin-left: 10px; letter-spacing: .07px; }
.url b { font-weight: 400; color: #202124; letter-spacing: -.15px; }
.pop { width: 16px; height: 15px; margin-left: auto; }
.star { width: 15px; height: 15px; margin-left: 16px; }
.ext { width: 16px; height: 16px; margin-left: 17px; }
.vsep { width: 1px; height: 16px; margin: 0 12px 0 16px; background: #c8c8c8; }
.avatar { width: 20px; height: 20px; border-radius: 50%; background: #05493e; color: #fff; font: 11px/20px Inter, sans-serif; text-align: center; }
.dots { width: 4px; height: 14px; margin-left: auto; }

.apphead { display: flex; align-items: center; height: 40px; padding-left: 29px; background: #04316c; color: #fff; position: relative; font-family: "DejaVu Serif Condensed", "DejaVu Serif", serif; font-weight: 700; }
.logo { font-size: 17.500px; letter-spacing: -1.100px; width: 44px; margin-top: -5px; line-height: 20px; font-stretch: condensed; -webkit-text-stroke: .4px #fff; }
.ver { font-size: 9px; letter-spacing: -.3px; margin-top: 1px; font-stretch: condensed; }
.find { display: flex; width: 254px; height: 24px; margin: -2px 232px 0 auto; font: 10.900px/24px "Noto Sans CJK SC", sans-serif; color: #000; }
.sel { display: flex; align-items: center; justify-content: space-between; width: 69px; padding: 0 5px 1px 9px; border-radius: 4px; background: #eee; }
.sel svg { width: 6px; height: 11px; }
.inp { flex: 1; padding-left: 6px; background: #fff; color: #757575; line-height: 25px; }
.go { display: flex; align-items: center; justify-content: center; width: 28px; background: #eee; }
.go svg { width: 13px; height: 13px; }

/* sidebar */
.body { display: flex; height: 858px; }
.side { width: 208px; background: #e0e0e0; }
.menu { width: 207px; list-style: none; border-right: 1px solid #c8c8c8; color: #214b84; }
.menu li { display: flex; align-items: center; height: 32px; padding: 0 0 1px 10px; border-bottom: 1px solid #c4c4c4; box-shadow: inset 0 -1px #d6d6d6; font-size: 13.300px; font-weight: 300; letter-spacing: -.4px; white-space: nowrap; }
.ic { width: 14px; height: 15px; margin-right: 6px; }
.wide { width: 19px; height: 14px; margin: 0 4px 0 -3px; }
.ch { width: 8px; height: 12px; margin: 0 17px 0 auto; }
.menu em { width: 31px; margin: -2px 3px 0 auto; border-radius: 9px; background: #4cab50; color: #fff; font-size: 11px; line-height: 18px; font-weight: 500; text-align: center; letter-spacing: 0; }
.box { width: 195px; margin-left: 6px; border: 1px solid #c8c8c8; box-shadow: 0 1px 2px #ccc; overflow: hidden; }
.box h3 { height: 25px; border-bottom: 1px solid #c8c8c8; color: #214b84; font-size: 13px; line-height: 26px; text-align: center; }
.box a { display: flex; align-items: center; height: 21px; white-space: nowrap; color: #2483c4; font-size: 10.750px; line-height: 21px; }
.rec { height: 177px; margin-top: 16px; }
.rec h3 { margin-bottom: 3px; }
.rec a svg { width: 12px; height: 11px; margin: -1px 5px 0 4px; color: #1c86c8; }
.apps { height: 79px; margin-top: 15px; }
.apps h3 { margin-bottom: 3px; }
.apps a { padding-left: 9px; }

/* page */
.main { width: 1712px; padding-left: 1px; border-right: 1px solid #d5d5d5; }
.titlebar { display: flex; align-items: center; height: 53px; padding: 0 15px 4px 19px; background: #eee; border-bottom: 1px solid #cecece; box-shadow: inset 0 -1px #e2e2e2; }
h1 { width: 480px; color: #04316c; font-size: 28.500px; font-weight: 300; line-height: 44px; white-space: nowrap; letter-spacing: -.54px; }
.doc, .org { color: #00f; font-size: 15.200px; text-decoration: underline; white-space: nowrap; margin-top: 10px; }
.org { margin-left: 10px; letter-spacing: .05px; }
.acts { display: flex; align-items: center; margin-left: auto; }
.btn { display: flex; align-items: center; height: 28px; padding: 0; border: 1px solid; border-radius: 3px; color: #fff; font: 700 12.200px/26px "Noto Sans CJK SC", sans-serif; white-space: nowrap; }
.blue { background: #337ab7; border-color: #2e6da4; }
.green { background: #5cb85c; border-color: #4cae4c; }
.btn svg { width: 13px; height: 13px; margin-right: 5px; }
.mod { width: 105px; padding-left: 7px; margin-right: 5px; }
.crear { width: 146px; padding-left: 6px; }
.recu { width: 98px; justify-content: center; }
.print { display: flex; align-items: center; justify-content: center; width: 24px; height: 24px; margin-left: 5px; border-radius: 2px; background: #fff; }
.print svg { width: 15px; height: 13px; }

.cols { display: flex; gap: 10px; height: 634px; padding: 15px 0 0 9px; }
.left, .right { display: flex; flex-direction: column; gap: 10px; }
.left { width: 836px; }
.right { width: 845px; }
.card { border: 1px solid #dadada; background: #fcfcfc; box-shadow: 0 1px 2px #ddd; }
.card h2 { height: 36px; padding-left: 15px; background: #fff; border-bottom: 1px solid #dadada; font-size: 12.550px; line-height: 33px; }
.right h2 { padding-left: 14.500px; }
.cb { padding: 13px 0 0 10px; }
.gen { height: 283px; } .lab { height: 134px; } .cta { height: 183px; }
.con { height: 252px; } .ser { height: 163px; }
.cta .cb { padding-top: 12px; }
.con .cb { padding-top: 11px; }
.row { display: grid; grid-template-columns: 214.500px 192.500px 214.500px 1fr; height: 25px; line-height: 20px; white-space: nowrap; }
.row.t { height: 29px; } .row.s { height: 24px; } .row.xs { height: 22px; } .row.l { height: 28px; }
.con .row { grid-template-columns: 216.500px 194.500px 114px 92px 1fr; }
.con .row.s { height: 23px; }
b { font-weight: 500; }
.row span, .srow span { color: #2483c4; }
.gen .row span, .con .row span { margin-top: -1px; }
.row .k { color: #000; }
.con .row.lastrow span { margin-top: 0; }
.ser .cb { padding-top: 10px; }
.srow { display: grid; height: 34px; line-height: 20px; white-space: nowrap; }
.r1 { grid-template-columns: 198px 213px 148px 1fr; }
.r2 { height: 28px; }
.r3 { grid-template-columns: 148px 263px 138px 68px 138px 1fr; }
.ok { width: 24px; height: 20px; margin-top: 3px; }
.lower { margin-top: 2px; }
.r3 .lower { margin-top: 1px; }
.r3 .two { line-height: 18px; width: 110px; white-space: normal; }
.r3 .sms { margin-top: -1px; }
.chk { width: 14px; height: 14px; border: 1px solid #ccc; border-radius: 3px; background: #fff; }
.r3 .chk { margin-top: 11px; }

.tabs { display: flex; height: 39px; margin: 11px 9px 0 9px; border-bottom: 1px solid #dadada; color: #2483c4; font-size: 12px; line-height: 37px; white-space: nowrap; }
.tabs span { padding: 0 16px; margin-right: 2px; }
.tabs .on { width: 88px; height: 39px; padding: 0 0 0 15px; background: #fff; border: 1px solid #dadada; border-bottom: 0; border-radius: 3px 3px 0 0; color: #444; line-height: 35px; }
.pane { height: 124px; margin: 0 9px 0 9px; padding: 14px 15px 0; background: linear-gradient(#fff 88px, #f0f0f0); border: solid #dadada; border-width: 0 1px; }
.thead { display: grid; grid-template-columns: 54px 117px 70px 204px 183px 82px 100px 134px 85px 111px 110px 125px 1fr; align-items: center; height: 36px; margin-top: 11px; padding: 0 12px 2px 141px; background: #f0f0f0; font-size: 10.750px; font-weight: 700; white-space: nowrap; }
.thead div { display: flex; align-items: center; justify-content: space-between; }
.thead i { display: flex; align-items: center; justify-content: center; width: 20px; height: 17px; border: 1px solid #c5c5c5; border-radius: 3px; background: #fff; }
.thead i svg { width: 7px; height: 4px; }
.thead i .up { width: 8px; height: 11px; }
.h1c { padding-right: 14px; } .h2c { padding-right: 57px; } .h3c { padding-right: 15px; } .h4c { padding-right: 132px; }
.h5c { padding-right: 117px; } .h6c { padding-right: 16px; } .h7c { padding-right: 17px; } .h8c { padding-right: 37px; }
.h9c { padding-right: 17px; } .h10c { padding-right: 18px; } .h11c { padding-right: 14px; } .h12c { padding-right: 18px; }
.trow { display: grid; grid-template-columns: 52px 73px 56px 118px 69px 367px 20px 240px 144px 110px 114px; padding: 8px 0 0 13px; line-height: 20px; white-space: nowrap; }
.circ { width: 28px; height: 28px; margin-top: -7px; }
.circ.low { margin-top: -5px; }
.id { color: #2483c4; }
.bang { width: 5px; height: 16px; margin-top: 2px; }
.pend { margin-top: -3px; }
.d { text-align: right; }

/* dock */
.dock {
  position: absolute; left: 53px; top: 1005px; display: flex; width: 1814px; height: 75px; padding: 9px 0 0 4px; border-radius: 4px 4px 0 0;
  background: linear-gradient(90deg, #8a6b62 0, #957069 120px, #c07f6c 210px, #d68b72 330px, #d58a70 560px, #b47b54 650px, #c87f45 740px, #f08c30 810px, #ef922c 1200px, #ee9030 1440px, #ca8236 1500px, #8f7a40 1580px, #d08434 1680px, #9a7c3c 1770px, #a97c38 1814px);
}
.app { position: relative; display: flex; justify-content: center; width: 63.450px; height: 66px; flex: none; }
.app svg { width: 52px; height: 52px; }
.petals ellipse { mix-blend-mode: multiply; }
.run::after { content: ""; position: absolute; left: 29px; top: 60px; width: 4px; height: 4px; border-radius: 50%; background: #3b0d08; }
.badge { position: absolute; left: 41px; top: -3px; width: 22px; height: 22px; border-radius: 50%; background: #fb423c; color: #fff; font: 13px/22px Inter, sans-serif; text-align: center; }
.dsep { width: 1px; height: 55px; margin: 0 12px 0 15px; background: #8c5a24; flex: none; }
.win svg { width: 56px; }
.t9 { font: 9px Inter, sans-serif; fill: #fff; }
.t22 { font: 25px Inter, sans-serif; fill: #222; letter-spacing: -1px; }
.t8 { font: 8px Inter, sans-serif; fill: #444; }
.t7 { font: 7px Inter, sans-serif; fill: #fff; }
.t18 { font: 700 19px Inter, sans-serif; fill: #fff; }
.tz { font: 7px Inter, sans-serif; fill: #666; }
```
